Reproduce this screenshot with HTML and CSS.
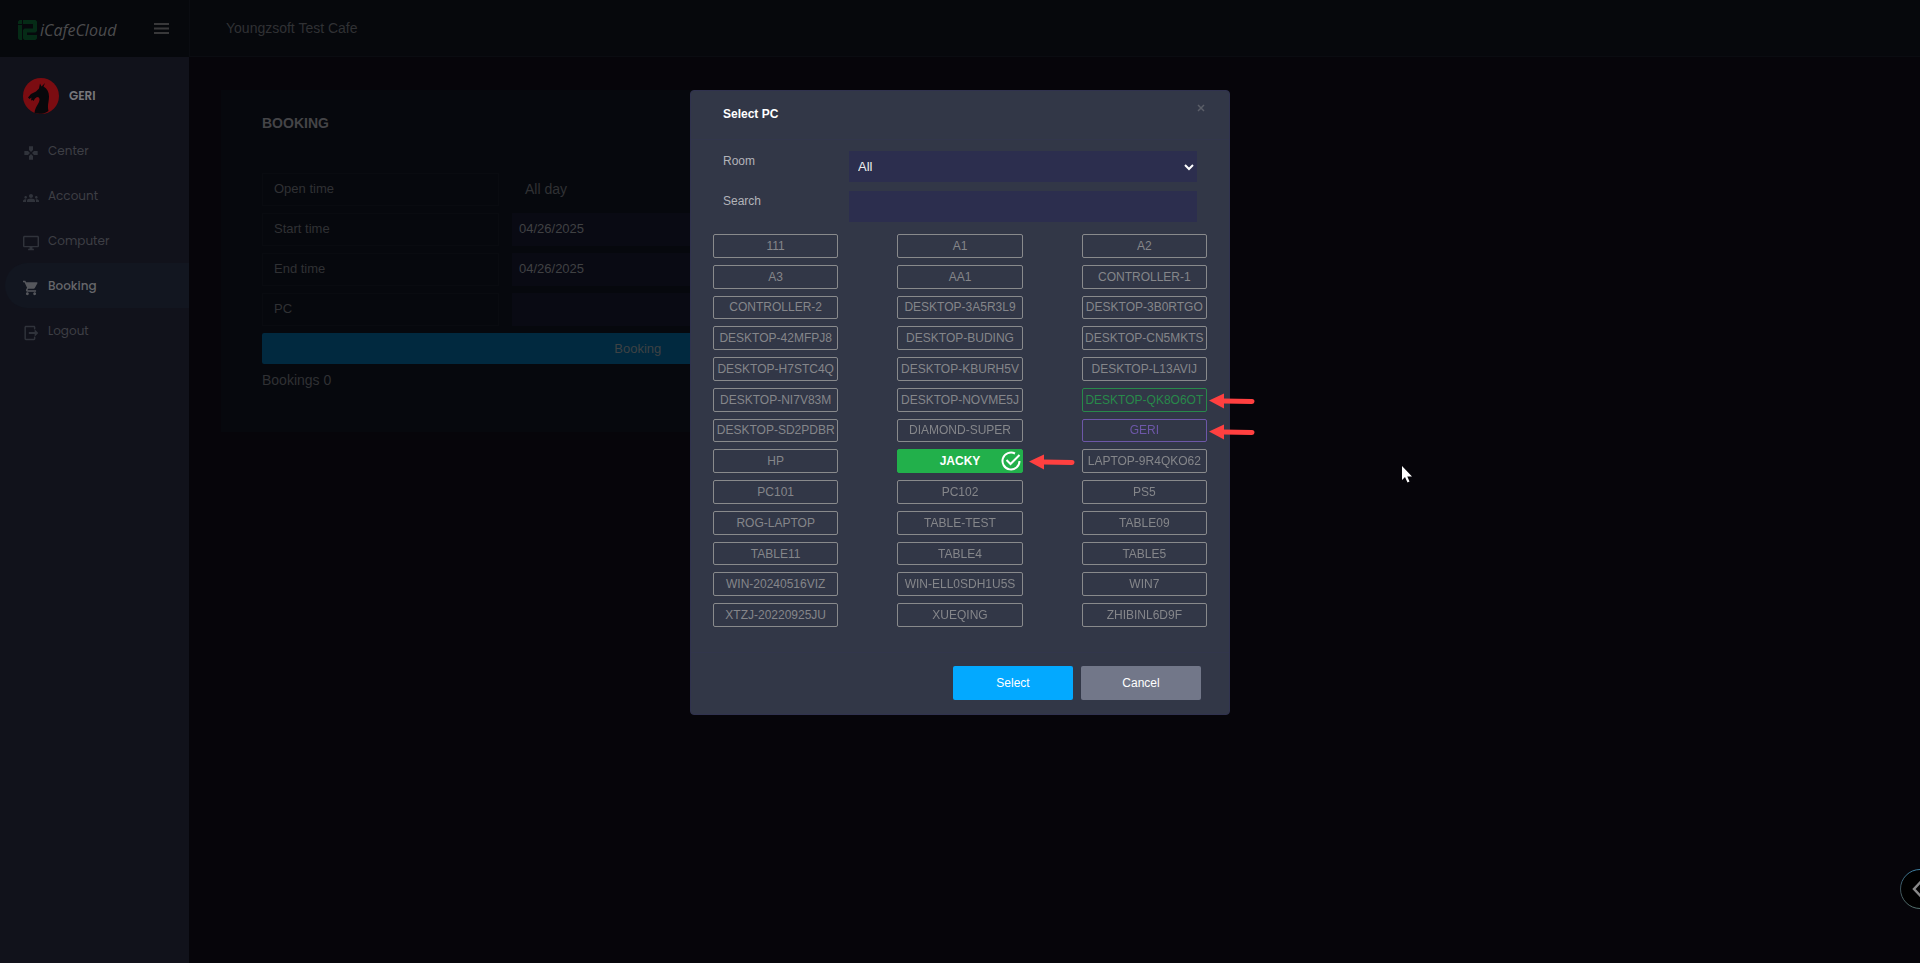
FILE: index.html
```html
<!DOCTYPE html>
<html lang="en">
<head>
    <meta charset="UTF-8">
    <meta name="viewport" content="width=device-width, initial-scale=1.0">
    <title>iCafeCloud - Booking</title>
    <link rel="stylesheet" href="styles.css">
</head>
<body>
    <header class="topbar">
        <div class="brand">
            <a class="logo" href="#">
                <svg width="20" height="20" viewBox="0 0 20 20" aria-hidden="true">
                    <path fill="#052b16" d="M0 5h4v15H1.500L0 18.500zM0 1.500 1.500 0H4v4H0zM5 0h12.500L19 1.500V11L17.500 12.500H9V15h10v3.500L17.500 20H6.500L5 18.500V10L6.500 8.500H15V4H5z"/>
                </svg>
                <span class="logo-text">iCafeCloud</span>
            </a>
            <button class="menu-toggle" type="button" aria-label="Toggle menu">
                <svg width="15" height="12" viewBox="0 0 15 12"><path fill="#38383a" d="M0 0h15v2H0zM0 4.500h15v2H0zM0 9h15v2H0z"/></svg>
            </button>
        </div>
        <div class="cafe-name">Youngzsoft Test Cafe</div>
    </header>

    <div class="layout">
        <aside class="sidebar">
            <div class="user">
                <svg width="36" height="36" viewBox="0 0 36 36" aria-hidden="true">
                    <circle cx="18" cy="18" r="18" fill="#7b0c11"/>
                    <path fill="#08080b" d="M11.500 35c.500-6 4.500-9 5-13 .2-2-.7-3-2.500-3l-2 1.500-1.500 2.500-1-1-1.500.500.500-3-2 1.500-1.500-1.500L8 16l5-2.500 3-3 1-5 1.500 3L22 5l-1.500 3.500c3.500 2 5.500 5.500 5.500 10 0 5.500-2 9-.500 14.500-4 3-9.500 3.500-14 2z"/>
                </svg>
                <span>GERI</span>
            </div>
            <nav class="menu">
                <a href="#">
                    <svg width="16" height="16" viewBox="0 0 24 24"><path d="M15 7.500V2H9v5.500l3 3 3-3zM7.500 9H2v6h5.500l3-3-3-3zM9 16.500V22h6v-5.500l-3-3-3 3zM16.500 9l-3 3 3 3H22V9h-5.500z"/></svg>
                    <span>Center</span>
                </a>
                <a href="#">
                    <svg width="16" height="16" viewBox="0 0 24 24"><path d="M12 12.750c1.630 0 3.070.390 4.240.900 1.080.480 1.760 1.560 1.760 2.730V18H6v-1.610c0-1.180.680-2.260 1.760-2.730 1.170-.520 2.610-.910 4.240-.910zM4 13c1.100 0 2-.900 2-2s-.900-2-2-2-2 .900-2 2 .900 2 2 2zm1.130 1.100C4.760 14.040 4.390 14 4 14c-.990 0-1.930.210-2.780.580C.480 14.900 0 15.620 0 16.430V18h4.500v-1.610c0-.830.230-1.610.630-2.290zM20 13c1.100 0 2-.900 2-2s-.900-2-2-2-2 .900-2 2 .900 2 2 2zm4 3.430c0-.810-.480-1.530-1.220-1.850C21.930 14.210 20.990 14 20 14c-.390 0-.760.040-1.130.100.400.680.630 1.460.630 2.290V18H24v-1.570zM12 6c1.660 0 3 1.340 3 3s-1.340 3-3 3-3-1.340-3-3 1.340-3 3-3z"/></svg>
                    <span>Account</span>
                </a>
                <a href="#">
                    <svg width="16" height="16" viewBox="1 1 22 22"><path d="M21 2H3c-1.100 0-2 .900-2 2v12c0 1.100.900 2 2 2h7v2H8v2h8v-2h-2v-2h7c1.100 0 2-.900 2-2V4c0-1.100-.900-2-2-2zm0 14H3V4h18v12z"/></svg>
                    <span>Computer</span>
                </a>
                <a href="#" class="active">
                    <svg width="16" height="16" viewBox="1 1 22 22"><path d="M7 18c-1.100 0-1.990.900-1.990 2S5.900 22 7 22s2-.900 2-2-.900-2-2-2zM1 2v2h2l3.600 7.590-1.350 2.450C4.520 15.370 5.480 17 7 17h12v-2H7.420c-.140 0-.250-.110-.250-.250l.930-1.750h7.450c.750 0 1.410-.410 1.750-1.030L21 4.960A1 1 0 0 0 20 4H5.210l-.940-2H1zm16 16c-1.100 0-1.990.900-1.990 2s.890 2 1.990 2 2-.900 2-2-.900-2-2-2z"/></svg>
                    <span>Booking</span>
                </a>
                <a href="#">
                    <svg width="16" height="16" viewBox="1 1 22 22"><path d="M5 2h11c1.100 0 2 .900 2 2v3h-2V4H5v16h11v-3h2v3c0 1.100-.900 2-2 2H5c-1.100 0-2-.900-2-2V4c0-1.100.900-2 2-2zm12 5 5 5-5 5v-3.500H9v-3h8z"/></svg>
                    <span>Logout</span>
                </a>
            </nav>
        </aside>

        <main class="content">
            <section class="card">
                <h1>BOOKING</h1>
                <form class="booking-form">
                    <div class="form-row">
                        <span class="row-label">Open time</span>
                        <span class="row-text">All day</span>
                    </div>
                    <div class="form-row">
                        <label class="row-label" for="start">Start time</label>
                        <input id="start" type="text" value="04/26/2025">
                    </div>
                    <div class="form-row">
                        <label class="row-label" for="end">End time</label>
                        <input id="end" type="text" value="04/26/2025">
                    </div>
                    <div class="form-row">
                        <label class="row-label" for="pc">PC</label>
                        <input id="pc" type="text">
                    </div>
                    <button class="btn-booking" type="button">Booking</button>
                </form>
                <p class="total">Bookings 0</p>
            </section>
        </main>
    </div>

    <button class="side-handle" type="button" aria-label="Open panel">
        <svg width="40" height="40" viewBox="0 0 40 40">
            <defs>
                <linearGradient id="ring" x1="0" y1="0" x2="0" y2="1">
                    <stop offset="0" stop-color="#3d7fa0"/>
                    <stop offset=".5" stop-color="#3c5058"/>
                    <stop offset="1" stop-color="#53706c"/>
                </linearGradient>
            </defs>
            <circle cx="20" cy="20" r="19.500" fill="#000" stroke="url(#ring)"/>
            <path d="M21 12.500 14 20l7 7.500" fill="none" stroke="#888" stroke-width="2.500"/>
        </svg>
    </button>

    <div class="modal" role="dialog" aria-labelledby="modal-title">
        <div class="modal-header">
            <h2 id="modal-title">Select PC</h2>
            <button class="close" type="button" aria-label="Close">
                <svg width="8" height="8" viewBox="0 0 8 8"><path d="m1 1 6 6M7 1 1 7" stroke="#5b5e68" stroke-width="1.500"/></svg>
            </button>
        </div>
        <div class="filters">
            <label for="room">Room</label>
            <div class="select-wrap">
                <select id="room"><option>All</option></select>
                <svg width="10" height="7" viewBox="0 0 10 7"><path d="m1 1 4 4 4-4" fill="none" stroke="#fff" stroke-width="2"/></svg>
            </div>
            <label for="search">Search</label>
            <input id="search" type="text">
        </div>
        <div class="pc-list">
            <button type="button">111</button>
            <button type="button">A1</button>
            <button type="button">A2</button>
            <button type="button">A3</button>
            <button type="button">AA1</button>
            <button type="button">CONTROLLER-1</button>
            <button type="button">CONTROLLER-2</button>
            <button type="button">DESKTOP-3A5R3L9</button>
            <button type="button">DESKTOP-3B0RTGO</button>
            <button type="button">DESKTOP-42MFPJ8</button>
            <button type="button">DESKTOP-BUDING</button>
            <button type="button">DESKTOP-CN5MKTS</button>
            <button type="button">DESKTOP-H7STC4Q</button>
            <button type="button">DESKTOP-KBURH5V</button>
            <button type="button">DESKTOP-L13AVIJ</button>
            <button type="button">DESKTOP-NI7V83M</button>
            <button type="button">DESKTOP-NOVME5J</button>
            <button type="button" class="online">DESKTOP-QK8O6OT
                <svg class="arrow" width="48" height="16" viewBox="0 0 48 16"><path d="M14 8 43 8.500" stroke="#ff4040" stroke-width="5" stroke-linecap="round"/><path fill="#ff4040" d="M0 7.500 15 .500v15z"/></svg>
            </button>
            <button type="button">DESKTOP-SD2PDBR</button>
            <button type="button">DIAMOND-SUPER</button>
            <button type="button" class="own">GERI
                <svg class="arrow" width="48" height="16" viewBox="0 0 48 16"><path d="M14 8 43 8.500" stroke="#ff4040" stroke-width="5" stroke-linecap="round"/><path fill="#ff4040" d="M0 7.500 15 .500v15z"/></svg>
            </button>
            <button type="button">HP</button>
            <button type="button" class="selected">JACKY
                <svg class="check" width="20" height="20" viewBox="0 0 20 20"><path d="M14 2.500A8.500 8.500 0 1 0 18.500 10M5.500 9l4 4L18.500 4" fill="none" stroke="#fff" stroke-width="2"/></svg>
                <svg class="arrow" width="48" height="16" viewBox="0 0 48 16"><path d="M14 8 43 8.500" stroke="#ff4040" stroke-width="5" stroke-linecap="round"/><path fill="#ff4040" d="M0 7.500 15 .500v15z"/></svg>
            </button>
            <button type="button">LAPTOP-9R4QKO62</button>
            <button type="button">PC101</button>
            <button type="button">PC102</button>
            <button type="button">PS5</button>
            <button type="button">ROG-LAPTOP</button>
            <button type="button">TABLE-TEST</button>
            <button type="button">TABLE09</button>
            <button type="button">TABLE11</button>
            <button type="button">TABLE4</button>
            <button type="button">TABLE5</button>
            <button type="button">WIN-20240516VIZ</button>
            <button type="button">WIN-ELL0SDH1U5S</button>
            <button type="button">WIN7</button>
            <button type="button">XTZJ-20220925JU</button>
            <button type="button">XUEQING</button>
            <button type="button">ZHIBINL6D9F</button>
        </div>
        <div class="modal-footer">
            <button class="btn btn-primary" type="button">Select</button>
            <button class="btn btn-secondary" type="button">Cancel</button>
        </div>
    </div>

    <svg class="cursor" width="12" height="18" viewBox="0 0 12 18" aria-hidden="true">
        <path fill="#fff" d="M1 0v14l3-3 2.500 5.500 2-1L6.300 10.500H11z"/>
    </svg>
</body>
</html>
```
FILE: styles.css
```css
* {
    box-sizing: border-box;
}
body {
    margin: 0;
    min-height: 100vh;
    display: flex;
    flex-direction: column;
    background: #06050a;
    color: #303134;
    font-family: Arial, "Liberation Sans", sans-serif;
    font-size: 14px;
}
button, input, select {
    font-family: inherit;
    color: inherit;
    border: 0;
    border-radius: 0;
    margin: 0;
}
button {
    padding: 0;
    background: none;
    cursor: pointer;
}
h1, h2, p {
    margin: 0;
}

/* top bar */
.topbar {
    display: flex;
    height: 57px;
    background: #06080c;
}
.brand {
    width: 190px;
    padding: 0 20px 0 18px;
    display: flex;
    align-items: center;
    justify-content: space-between;
    border-right: 1px solid #0a0c11;
}
.logo {
    display: flex;
    align-items: center;
    gap: 2px;
    padding-top: 3px;
    color: #4c4c4e;
    text-decoration: none;
}
.logo-text {
    font-family: "Open Sans", sans-serif;
    font-size: 16px;
    font-style: italic;
    line-height: 20px;
}
.menu-toggle svg {
    display: block;
}
.cafe-name {
    flex: 1;
    padding-left: 36px;
    line-height: 56px;
    border-bottom: 1px solid #0a0c11;
}

/* sidebar */
.layout {
    display: flex;
    flex: 1;
}
.sidebar {
    width: 189px;
    padding-top: 21px;
    background: #11121b;
    font-family: Poppins, Inter, sans-serif;
    font-size: 12px;
}
.user {
    display: flex;
    align-items: center;
    gap: 10px;
    padding-left: 23px;
    color: #77777b;
    font-weight: 600;
}
.menu {
    margin-top: 14px;
}
.menu a {
    display: flex;
    align-items: center;
    gap: 9px;
    height: 45px;
    margin-left: 5px;
    padding-left: 18px;
    color: #3e3f45;
    text-decoration: none;
    border-radius: 23px 0 0 23px;
}
.menu svg {
    fill: #30333b;
    margin-top: 4px;
}
.menu .active {
    background: #121620;
    color: #66676b;
    font-weight: 500;
}
.menu .active svg {
    fill: #55575c;
}

/* booking card */
.content {
    flex: 1;
    padding: 33px 32px;
}
.card {
    width: 50%;
    max-width: 834px;
    padding: 24px 41px 44px;
    background: #06080d;
}
.card h1 {
    font-size: 14px;
    line-height: 18px;
    color: #444447;
}
.booking-form {
    display: flex;
    flex-direction: column;
    gap: 7px;
    margin-top: 41px;
    font-size: 13px;
}
.form-row {
    display: flex;
    gap: 13px;
}
.row-label {
    width: 237px;
    height: 33px;
    padding-left: 11px;
    line-height: 30px;
    border: 1px solid #090b10;
}
.row-text {
    padding-left: 13px;
    font-size: 14px;
    line-height: 33px;
}
.form-row input {
    flex: 1;
    padding: 0 7px 3px;
    font-size: 13px;
    background: #090a13;
    color: #404143;
}
.btn-booking {
    height: 31px;
    background: #01293f;
    color: #3e4244;
    font-size: 13px;
    border-radius: 2px;
}
.total {
    margin-top: 8px;
    line-height: 16px;
}
.side-handle {
    position: fixed;
    right: -20px;
    bottom: 54px;
}
.side-handle svg {
    display: block;
}

/* select pc modal */
.modal {
    position: fixed;
    top: 90px;
    left: 50%;
    width: 540px;
    margin-left: -270px;
    background: #323747;
    border: 1px solid #30324f;
    border-radius: 4px;
    color: #b2b3b9;
    font-size: 12px;
}
.modal-header {
    display: flex;
    justify-content: space-between;
    align-items: flex-start;
    height: 49px;
    padding: 13px 24px 0 32px;
    border-bottom: 1px solid #32364c;
}
.modal-header h2 {
    font-size: 12px;
    line-height: 20px;
    color: #fff;
}
.close svg {
    display: block;
}
.filters {
    display: grid;
    grid-template-columns: 126px 1fr;
    row-gap: 9px;
    padding: 11px 32px 0;
}
.filters label {
    line-height: 20px;
}
.filters select,
.filters input {
    width: 100%;
    height: 31px;
    padding: 0 9px;
    background: #2c2e4e;
    color: #eee;
    font-size: 13px;
}
.select-wrap {
    position: relative;
}
.filters select {
    appearance: none;
}
.select-wrap svg {
    position: absolute;
    right: 3px;
    top: 13px;
}
.pc-list {
    display: grid;
    grid-template-columns: repeat(3, 1fr);
    grid-auto-rows: 1fr;
    gap: 7px 59px;
    min-height: 393px;
    padding: 0 22px;
    margin-top: 12px;
}
.pc-list button {
    position: relative;
    border: 1px solid #898a8c;
    border-radius: 2px;
    color: #85868a;
    font-size: 12px;
    white-space: nowrap;
}
.pc-list .online {
    border-color: #28894a;
    color: #28894a;
}
.pc-list .own {
    border-color: #6d57a8;
    color: #6d57a8;
}
.pc-list .selected {
    border-color: #22b04b;
    background: #22b04b;
    color: #fff;
    font-weight: bold;
}
.check {
    position: absolute;
    right: 1px;
    top: 1px;
}
.arrow {
    position: absolute;
    left: 100%;
    top: 4px;
    margin-left: 3px;
}
.selected .arrow {
    margin-left: 7px;
}
.modal-footer {
    display: flex;
    justify-content: flex-end;
    gap: 8px;
    margin-top: 25px;
    padding: 13px 28px 14px;
    border-top: 1px solid #32364c;
}
.btn {
    width: 120px;
    height: 34px;
    border-radius: 2px;
    font-size: 12px;
    color: #fff;
}
.btn-primary {
    background: #03a9ff;
}
.btn-secondary {
    background: #727789;
}
.cursor {
    position: fixed;
    left: 1401px;
    top: 466px;
}
```
